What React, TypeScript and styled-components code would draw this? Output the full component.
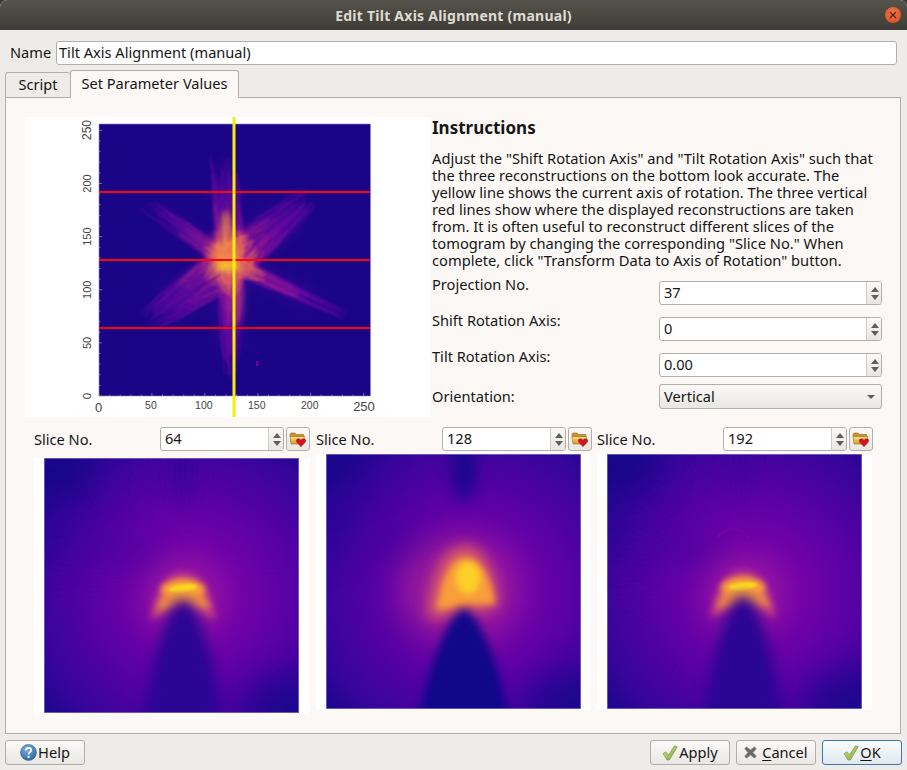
import React from 'react';
import { createGlobalStyle, styled } from 'styled-components';

const FONT = `"Noto Sans", "Open Sans", sans-serif`;
const BORDER = '#b3afa8';
const DIALOG_BG = '#eeece8';
const PANEL_BG = '#fcf8f5';

const GlobalStyle = createGlobalStyle`
  html, body {
    margin: 0;
    padding: 0;
    background: #3a3933;
  }
  body {
    font-family: ${FONT};
    font-size: 14.6px;
    color: #161616;
  }
`;

const Window = styled.div`
  width: 907px;
  height: 770px;
  display: flex;
  flex-direction: column;
  background: ${DIALOG_BG};
  border-radius: 7px 7px 0 0;
  overflow: hidden;
`;

const TitleBar = styled.div`
  height: 30px;
  flex: none;
  position: relative;
  display: flex;
  align-items: center;
  justify-content: center;
  background: linear-gradient(#55534b, #3d3c36);
  color: #dfdbd2;
  font-weight: 700;
  font-size: 14px;
  letter-spacing: 0.25px;
`;

const CloseButton = styled.div`
  position: absolute;
  top: 7px;
  right: 6px;
  width: 16px;
  height: 16px;
  border-radius: 50%;
  background: radial-gradient(circle at 50% 35%, #f2764a, #d9481c);
  display: flex;
  align-items: center;
  justify-content: center;
`;

const Body = styled.div`
  flex: 1;
  display: flex;
  flex-direction: column;
  padding: 0 5px 5px;
  min-height: 0;
`;

const NameRow = styled.div`
  display: flex;
  align-items: center;
  margin: 11px 5px 5px 5px;
`;

const NameLabel = styled.span`
  width: 46px;
  flex: none;
  padding-bottom: 2px;
`;

const Field = styled.div`
  flex: 1;
  height: 24px;
  box-sizing: border-box;
  border: 1px solid ${BORDER};
  border-radius: 3px;
  background: #fff;
  padding: 0 2px 2px;
  display: flex;
  align-items: center;
`;

const TabBar = styled.div`
  display: flex;
  align-items: flex-end;
  height: 28px;
  margin-bottom: -1px;
  position: relative;
  z-index: 1;
`;

const Tab = styled.div<{ $active?: boolean }>`
  box-sizing: border-box;
  display: flex;
  align-items: center;
  justify-content: center;
  border: 1px solid ${BORDER};
  border-radius: 3px 3px 0 0;
  padding-bottom: 2px;
  height: ${({ $active }) => ($active ? 28 : 26)}px;
  width: ${({ $active }) => ($active ? 169 : 65)}px;
  background: ${({ $active }) => ($active ? PANEL_BG : DIALOG_BG)};
  ${({ $active }) => $active && 'border-bottom-color: ' + PANEL_BG + ';'}
  ${({ $active }) => !$active && 'border-right: none;'}
`;

const Panel = styled.div`
  flex: none;
  width: 896px;
  height: 637px;
  box-sizing: border-box;
  border: 1px solid ${BORDER};
  background: ${PANEL_BG};
  padding: 19px 0 0 19px;
`;

const TopRow = styled.div`
  display: flex;
  gap: 2px;
  height: 300px;
`;

const PlotBox = styled.div`
  width: 405px;
  height: 300px;
  background: #fff;
  flex: none;
  svg {
    display: block;
  }
`;

const Side = styled.div`
  width: 450px;
  display: flex;
  flex-direction: column;
`;

const Heading = styled.div`
  font-size: 17px;
  font-weight: 700;
  line-height: 22px;
  margin-bottom: 11px;
`;

const Instructions = styled.div`
  font-size: 14.7px;
  line-height: 17px;
  white-space: nowrap;
  margin-bottom: 12px;
`;

const FormRow = styled.div<{ $gap: number; $center?: boolean }>`
  display: flex;
  justify-content: space-between;
  align-items: ${({ $center }) => ($center ? 'center' : 'flex-start')};
  margin-bottom: ${({ $gap }) => $gap}px;
  line-height: 18px;
`;

const RowLabel = styled.span<{ $lift: number }>`
  margin-top: ${({ $lift }) => -$lift}px;
`;

const Spin = styled.div<{ $width: number }>`
  width: ${({ $width }) => $width}px;
  height: 24px;
  box-sizing: border-box;
  border: 1px solid ${BORDER};
  border-radius: 3px;
  background: #fff;
  display: flex;
  overflow: hidden;
  flex: none;
`;

const SpinValue = styled.div`
  flex: 1;
  padding-left: 4px;
  line-height: 21px;
`;

const SpinArrows = styled.div`
  width: 13px;
  padding: 0 0 0 1px;
  border-left: 1px solid #cfccc6;
  background: linear-gradient(#fbfaf9, #e8e6e2);
  display: flex;
  flex-direction: column;
  align-items: center;
  justify-content: center;
  gap: 3px;
`;

const ArrowUp = styled.span`
  width: 0;
  height: 0;
  border-left: 4px solid transparent;
  border-right: 4px solid transparent;
  border-bottom: 5px solid #5f5f5f;
`;

const ArrowDown = styled.span`
  width: 0;
  height: 0;
  border-left: 4px solid transparent;
  border-right: 4px solid transparent;
  border-top: 5px solid #5f5f5f;
`;

const Combo = styled.div`
  width: 223px;
  height: 25px;
  box-sizing: border-box;
  border: 1px solid ${BORDER};
  border-radius: 3px;
  background: linear-gradient(#fbfaf9, #e9e7e3);
  display: flex;
  align-items: center;
  justify-content: space-between;
  padding: 0 6px 2px 4px;
`;

const ComboArrow = styled.span`
  width: 0;
  height: 0;
  border-left: 4px solid transparent;
  border-right: 4px solid transparent;
  border-top: 4px solid #5f5f5f;
  margin-top: 2px;
`;

const SliceRow = styled.div`
  display: grid;
  grid-template-columns: 276px 275px 275px;
  column-gap: 6px;
  margin: 10px 0 0 9px;
`;

const SliceHead = styled.div`
  display: flex;
  align-items: center;
  height: 24px;
`;

const SliceLabel = styled.div`
  width: 126px;
  flex: none;
`;

const IconButton = styled.div`
  width: 24px;
  height: 24px;
  box-sizing: border-box;
  margin-left: 2px;
  border: 1px solid ${BORDER};
  border-radius: 3px;
  background: linear-gradient(#fbfaf9, #e9e7e3);
  display: flex;
  align-items: center;
  justify-content: center;
  flex: none;
`;

const SliceFrame = styled.div<{ $top: number }>`
  width: 100%;
  height: 256px;
  background: #fff;
  margin-top: ${({ $top }) => $top}px;
  padding-left: 10px;
  box-sizing: border-box;
  svg {
    display: block;
  }
`;

const ButtonBar = styled.div`
  display: flex;
  gap: 6px;
  margin-top: 6px;
`;

const Spacer = styled.div`
  flex: 1;
`;

const ButtonText = styled.span`
  margin-top: -2px;
  u {
    text-underline-offset: 2px;
  }
`;

const Button = styled.div<{ $default?: boolean }>`
  width: 80px;
  height: 25px;
  box-sizing: border-box;
  border: 1px solid ${({ $default }) => ($default ? '#3b7aa8' : BORDER)};
  border-radius: 3px;
  background: ${({ $default }) =>
    $default ? 'linear-gradient(#fbfcfd, #dfe8ee)' : 'linear-gradient(#fbfaf9, #e9e7e3)'};
  display: flex;
  align-items: center;
  justify-content: center;
  gap: 1px;
`;

const Spinner = ({ value, width }: { value: string; width: number }) => (
  <Spin $width={width}>
    <SpinValue>{value}</SpinValue>
    <SpinArrows>
      <ArrowUp />
      <ArrowDown />
    </SpinArrows>
  </Spin>
);

// small seeded generator so the fibres stay the same between loads
const makeRandom = (seed: number) => () => {
  seed = (seed * 16807) % 2147483647;
  return seed / 2147483647;
};

const CENTER = { x: 132, y: 139 };

const ARMS = [
  { x: 124, y: 30, spread: 30, tip: 14, count: 70 },
  { x: 46, y: 78, spread: 16, tip: 9, count: 45 },
  { x: 214, y: 72, spread: 44, tip: 12, count: 90 },
  { x: 248, y: 192, spread: 20, tip: 5, count: 50 },
  { x: 48, y: 198, spread: 46, tip: 14, count: 90 },
  { x: 130, y: 256, spread: 30, tip: 6, count: 70 },
];

const fibres = (seed: number, reach: number, density: number) => {
  const random = makeRandom(seed);
  const paths: { d: string; width: number }[] = [];
  ARMS.forEach((arm) => {
    for (let i = 0; i < arm.count * density; i++) {
      const len = reach * (0.5 + random() * 0.5);
      const dx = arm.x - CENTER.x;
      const dy = arm.y - CENTER.y;
      const norm = Math.hypot(dx, dy);
      const nx = -dy / norm;
      const ny = dx / norm;
      const side = random() - 0.5;
      const bend = (random() - 0.5) * 8;
      // fibres run side by side as a bundle, then pinch towards the tip
      const sx = CENTER.x + nx * side * arm.spread * 0.7 + (random() - 0.5) * 10;
      const sy = CENTER.y + ny * side * arm.spread * 0.7 + (random() - 0.5) * 10;
      const mx = CENTER.x + dx * 0.5 * len + nx * (side * arm.spread + bend);
      const my = CENTER.y + dy * 0.5 * len + ny * (side * arm.spread + bend);
      const ex = CENTER.x + dx * len + nx * side * arm.tip * 2;
      const ey = CENTER.y + dy * len + ny * side * arm.tip * 2;
      paths.push({
        d: `M${sx.toFixed(1)} ${sy.toFixed(1)}Q${mx.toFixed(1)} ${my.toFixed(1)} ${ex.toFixed(1)} ${ey.toFixed(1)}`,
        width: 0.6 + random() * 1.1,
      });
    }
  });
  return paths;
};

const OUTER = fibres(7, 1, 1);
const MIDDLE = fibres(31, 0.6, 0.8);
const INNER = fibres(97, 0.3, 0.7);

const TICKS = Array.from({ length: 26 }, (_, i) => i * 10);
const scaleX = (v: number) => 74 + (v * 271) / 256;
const scaleY = (v: number) => 279 - (v * 272) / 256;

const AxisLabels = [50, 100, 150, 200];

const Blur = ({ id, amount }: { id: string; amount: number }) => (
  <filter id={id} filterUnits="userSpaceOnUse" x="-120" y="-120" width="620" height="620" colorInterpolationFilters="sRGB">
    <feGaussianBlur stdDeviation={amount} />
  </filter>
);

const Plot = () => (
  <svg width={405} height={300} viewBox="0 0 405 300">
    <defs>
      <Blur id="soft" amount={0.9} />
      <Blur id="wide" amount={8} />
      <Blur id="softer" amount={3} />
      <clipPath id="plotClip">
        <rect x={0} y={0} width={271} height={272} />
      </clipPath>
    </defs>
    <rect x={74} y={7} width={271.5} height={272} fill="#1b0587" stroke="#8d8bc6" strokeWidth={0.6} />
    <g transform="translate(74 7)" clipPath="url(#plotClip)">
      <g filter="url(#wide)" stroke="#6a0aa6" strokeLinecap="round" opacity={0.4}>
        {ARMS.map((arm, i) => (
          <line key={i} x1={CENTER.x} y1={CENTER.y} x2={(CENTER.x + arm.x * 2) / 3} y2={(CENTER.y + arm.y * 2) / 3} strokeWidth={arm.spread * 0.6} />
        ))}
      </g>
      <g filter="url(#soft)" fill="none" strokeLinecap="round">
        {OUTER.map((p, i) => (
          <path key={i} d={p.d} stroke={i % 3 ? '#640aa6' : '#8410a4'} strokeWidth={p.width} opacity={0.3} />
        ))}
        {MIDDLE.map((p, i) => (
          <path key={i} d={p.d} stroke={i % 2 ? '#9a1c95' : '#b0308a'} strokeWidth={p.width} opacity={0.22} />
        ))}
      </g>
      <ellipse cx={130} cy={130} rx={24} ry={28} fill="#b12a90" opacity={0.55} filter="url(#softer)" />
      <g filter="url(#soft)" fill="none" strokeLinecap="round">
        {INNER.map((p, i) => (
          <path key={i} d={p.d} stroke={i % 2 ? '#d8586c' : '#ec7a52'} strokeWidth={p.width} opacity={0.34} />
        ))}
      </g>
      <ellipse cx={127} cy={105} rx={5} ry={18} fill="#f59a3f" opacity={0.7} filter="url(#softer)" />
      <ellipse cx={127} cy={128} rx={15} ry={12} fill="#f58f45" opacity={0.7} filter="url(#softer)" />
      <ellipse cx={128} cy={142} rx={13} ry={6} fill="#fcd225" opacity={0.8} filter="url(#softer)" />
      <ellipse cx={138} cy={175} rx={7} ry={26} fill="#cc4778" opacity={0.45} filter="url(#softer)" />
      <rect x={157} y={237} width={2.5} height={5} fill="#6a00a8" />
    </g>
    {TICKS.map((t) => (
      <g key={t} stroke="#9a9a9a" strokeWidth={0.7}>
        <line x1={scaleX(t)} x2={scaleX(t)} y1={279} y2={t % 50 ? 277.5 : 276} />
        <line x1={74} x2={t % 50 ? 75.5 : 77} y1={scaleY(t)} y2={scaleY(t)} />
      </g>
    ))}
    <g fontFamily={`"Liberation Sans", sans-serif`} fill="#444">
      <text x={73.5} y={295} fontSize={13} textAnchor="middle">0</text>
      <text x={339} y={294} fontSize={13} textAnchor="middle">250</text>
      {AxisLabels.map((v) => (
        <text key={v} x={scaleX(v) - 1} y={292} fontSize={10.5} textAnchor="middle">{v}</text>
      ))}
      <text transform="translate(66 279) rotate(-90)" fontSize={11.5} textAnchor="middle">0</text>
      <text transform="translate(66 13) rotate(-90)" fontSize={12} textAnchor="middle">250</text>
      {AxisLabels.map((v) => (
        <text key={v} transform={`translate(66 ${scaleY(v)}) rotate(-90)`} fontSize={11} textAnchor="middle">{v}</text>
      ))}
    </g>
    <g fill="#fb0606">
      <rect x={74} y={74} width={271} height={2} />
      <rect x={74} y={142} width={271} height={2} />
      <rect x={74} y={210} width={271} height={2} />
    </g>
    <rect x={207.5} y={0} width={3} height={300} fill="#f5ee0a" />
  </svg>
);

interface SliceImageProps {
  id: string;
  cx: number;
  apex: number;
  darkWidth: number;
  darkFill: string;
  domeBlur: number;
  notch: number;
  corner: number;
  children: React.ReactNode;
}

const RAYS = Array.from({ length: 120 }, (_, i) => (i * Math.PI) / 60);

const SliceImage = ({ id, cx, apex, darkWidth, darkFill, domeBlur, notch, corner, children }: SliceImageProps) => (
  <svg width={255} height={255} viewBox="0 0 255 255">
    <defs>
      <radialGradient id={`${id}-base`} cx="0.58" cy="0.54" r="0.72">
        <stop offset="0" stopColor="#8a08a5" />
        <stop offset="0.28" stopColor="#7002a8" />
        <stop offset="0.6" stopColor="#5001a3" />
        <stop offset="0.85" stopColor="#36059a" />
        <stop offset="1" stopColor="#1f068d" />
      </radialGradient>
      <Blur id={`${id}-b14`} amount={16} />
      <Blur id={`${id}-b7`} amount={7} />
      <Blur id={`${id}-dome`} amount={domeBlur} />
      <Blur id={`${id}-b3`} amount={3} />
      <Blur id={`${id}-b1`} amount={1} />
      <clipPath id={`${id}-clip`}>
        <rect width={255} height={255} />
      </clipPath>
    </defs>
    <g clipPath={`url(#${id}-clip)`}>
      <rect width={255} height={255} fill={`url(#${id}-base)`} />
      <ellipse cx={8} cy={12} rx={48} ry={34} fill="#170789" opacity={corner} filter={`url(#${id}-b14)`} />
      <ellipse cx={6} cy={72} rx={20} ry={30} fill="#2a0694" opacity={0.7} filter={`url(#${id}-b14)`} />
      <ellipse cx={70} cy={92} rx={52} ry={12} fill="#3c049b" opacity={0.6} filter={`url(#${id}-b14)`} transform="rotate(18 70 92)" />
      <ellipse cx={cx} cy={14} rx={12} ry={34} fill="#15078a" opacity={notch} filter={`url(#${id}-b7)`} />
      <ellipse cx={250} cy={250} rx={50} ry={34} fill="#16078a" opacity={0.75} filter={`url(#${id}-b14)`} />
      {children}
      <path
        d={`M${cx - darkWidth} 268 C${cx - darkWidth * 0.8} ${apex + 60} ${cx - 14} ${apex} ${cx} ${apex} C${cx + 14} ${apex} ${cx + darkWidth * 0.8} ${apex + 60} ${cx + darkWidth} 268 Z`}
        fill={darkFill}
        filter={`url(#${id}-dome)`}
      />
    </g>
    <rect x={0.3} y={0.3} width={254.4} height={254.4} fill="none" stroke="#8d8bd6" strokeWidth={0.6} />
  </svg>
);

// thin bright arc sitting on the dark dome, slices 64 and 192
const ThinHotSpot = ({ id, cx, top }: { id: string; cx: number; top: number }) => (
  <>
    <g stroke="#8f0da4" strokeWidth={1} opacity={0.1}>
      {RAYS.map((a, i) => (
        <line key={i} x1={cx + Math.cos(a) * 50} y1={top + Math.sin(a) * 50} x2={cx + Math.cos(a) * 130} y2={top + Math.sin(a) * 130} />
      ))}
    </g>
    <ellipse cx={cx} cy={top + 18} rx={36} ry={36} fill="#a01ea0" opacity={0.85} filter={`url(#${id}-b14)`} />
    <path d={`M${cx - 33} ${top + 40} Q${cx - 26} ${top - 8} ${cx} ${top - 8} Q${cx + 26} ${top - 8} ${cx + 33} ${top + 40} L${cx} ${top + 30} Z`}
      fill="#bf3c85" opacity={0.9} filter={`url(#${id}-b3)`} />
    <path d={`M${cx - 27} ${top + 32} Q${cx - 18} ${top - 1} ${cx} ${top - 1} Q${cx + 18} ${top - 1} ${cx + 27} ${top + 30} L${cx} ${top + 24} Z`}
      fill="#f28a49" filter={`url(#${id}-b3)`} />
    <ellipse cx={cx} cy={top + 9} rx={22} ry={8} fill="#fca636" filter={`url(#${id}-b3)`} />
    <ellipse cx={cx} cy={top + 8} rx={14} ry={3.5} fill="#fcdc20" transform={`rotate(-6 ${cx} ${top + 8})`} filter={`url(#${id}-b1)`} />
  </>
);

const WideHotSpot = ({ id, cx }: { id: string; cx: number }) => (
  <>
    <ellipse cx={cx - 6} cy={135} rx={58} ry={52} fill="#a3209a" opacity={0.85} filter={`url(#${id}-b14)`} />
    <path d={`M${cx - 38} 164 Q${cx - 30} 92 ${cx} 92 Q${cx + 26} 92 ${cx + 34} 152 L${cx} 160 Z`}
      fill="#dc5f63" filter={`url(#${id}-b7)`} />
    <path d={`M${cx - 28} 156 Q${cx - 20} 104 ${cx} 104 Q${cx + 22} 104 ${cx + 30} 150 L${cx} 150 Z`}
      fill="#f89e3a" filter={`url(#${id}-b3)`} />
    <ellipse cx={cx + 3} cy={124} rx={12} ry={16} fill="#fdd028" filter={`url(#${id}-b3)`} />
  </>
);

const FolderHeart = () => (
  <svg width={18} height={17} viewBox="0 0 18 17">
    <defs>
      <linearGradient id="folder-fill" x1="0" y1="0" x2="0" y2="1">
        <stop offset="0" stopColor="#fbe08a" />
        <stop offset="1" stopColor="#d99a25" />
      </linearGradient>
    </defs>
    <path d="M1 3.5 Q1 2 2.5 2 H6 L7.5 3.5 H14 Q15 3.5 15 4.5 V5.5 H1 Z" fill="#c99430" stroke="#8c6a1c" strokeWidth={0.6} />
    <path d="M1 5.5 H15.5 L14.5 13 H2 Z" fill="url(#folder-fill)" stroke="#a67a1e" strokeWidth={0.7} />
    <path d="M12 15.8 L7.6 11 Q6.4 9 8.2 8 Q10.4 7.2 12 9.2 Q13.6 7.2 15.8 8 Q17.6 9 16.4 11 Z" fill="#d3141f" stroke="#8e1016" strokeWidth={0.4} />
  </svg>
);

const HelpIcon = () => (
  <svg width={17} height={17} viewBox="0 0 17 17">
    <defs>
      <radialGradient id="help-fill" cx="0.4" cy="0.3" r="0.8">
        <stop offset="0" stopColor="#7fb1dd" />
        <stop offset="1" stopColor="#20619f" />
      </radialGradient>
    </defs>
    <circle cx={8.5} cy={8.5} r={8} fill="url(#help-fill)" stroke="#27598a" strokeWidth={0.5} />
    <path d="M5.8 6.4 Q6 3.8 8.6 3.8 Q11.2 3.9 11.2 6 Q11.2 7.4 9.7 8.2 Q8.6 8.8 8.6 10.4" fill="none" stroke="#fff" strokeWidth={1.7} />
    <circle cx={8.6} cy={12.9} r={1.1} fill="#fff" />
  </svg>
);

const CheckIcon = ({ id }: { id: string }) => (
  <svg width={16} height={16} viewBox="0 0 16 16">
    <defs>
      <linearGradient id={id} x1="0" y1="0" x2="1" y2="1">
        <stop offset="0" stopColor="#d3e58a" />
        <stop offset="1" stopColor="#7ea234" />
      </linearGradient>
    </defs>
    <path d="M1 8.6 L3.8 6.8 L6.4 10 L12.6 0.8 L15.2 1.8 L7.4 15 L5 15 Z" fill={`url(#${id})`} stroke="#6f8f35" strokeWidth={0.6} />
  </svg>
);

const CancelIcon = () => (
  <svg width={13} height={13} viewBox="0 0 13 13">
    <path d="M2.6 0.8 L6.5 4 L10.4 0.8 L12.4 2.8 L9 6.5 L12.4 10.2 L10.4 12.2 L6.5 9 L2.6 12.2 L0.6 10.2 L4 6.5 L0.6 2.8 Z" fill="#6a6a68" stroke="#8a8a88" strokeWidth={0.5} />
  </svg>
);

const CloseIcon = () => (
  <svg width={8} height={8} viewBox="0 0 8 8">
    <path d="M1 1 L7 7 M7 1 L1 7" stroke="#4a2a1c" strokeWidth={1.3} />
  </svg>
);

interface SliceProps {
  value: string;
  top: number;
  children: React.ReactNode;
}

const Slice = ({ value, top, children }: SliceProps) => (
  <div>
    <SliceHead>
      <SliceLabel>Slice No.</SliceLabel>
      <Spinner value={value} width={124} />
      <IconButton>
        <FolderHeart />
      </IconButton>
    </SliceHead>
    <SliceFrame $top={top}>{children}</SliceFrame>
  </div>
);

const App = () => (
  <Window>
    <GlobalStyle />
    <TitleBar>
      Edit Tilt Axis Alignment (manual)
      <CloseButton>
        <CloseIcon />
      </CloseButton>
    </TitleBar>
    <Body>
      <NameRow>
        <NameLabel>Name</NameLabel>
        <Field>Tilt Axis Alignment (manual)</Field>
      </NameRow>
      <TabBar>
        <Tab>Script</Tab>
        <Tab $active>Set Parameter Values</Tab>
      </TabBar>
      <Panel>
        <TopRow>
          <PlotBox>
            <Plot />
          </PlotBox>
          <Side>
            <Heading>Instructions</Heading>
            <Instructions>
              Adjust the "Shift Rotation Axis" and "Tilt Rotation Axis" such that<br />
              the three reconstructions on the bottom look accurate. The<br />
              yellow line shows the current axis of rotation. The three vertical<br />
              red lines show where the displayed reconstructions are taken<br />
              from. It is often useful to reconstruct different slices of the<br />
              tomogram by changing the corresponding "Slice No." When<br />
              complete, click "Transform Data to Axis of Rotation" button.
            </Instructions>
            <FormRow $gap={12}>
              <RowLabel $lift={6}>Projection No.</RowLabel>
              <Spinner value="37" width={223} />
            </FormRow>
            <FormRow $gap={12}>
              <RowLabel $lift={6}>Shift Rotation Axis:</RowLabel>
              <Spinner value="0" width={223} />
            </FormRow>
            <FormRow $gap={7}>
              <RowLabel $lift={6}>Tilt Rotation Axis:</RowLabel>
              <Spinner value="0.00" width={223} />
            </FormRow>
            <FormRow $gap={0} $center>
              <RowLabel $lift={2}>Orientation:</RowLabel>
              <Combo>
                Vertical
                <ComboArrow />
              </Combo>
            </FormRow>
          </Side>
        </TopRow>
        <SliceRow>
          <Slice value="64" top={7}>
            <SliceImage id="s1" cx={139} apex={141} darkWidth={40} darkFill="#2a0593" domeBlur={7} notch={0.25} corner={0.7}>
              <ThinHotSpot id="s1" cx={139} top={122} />
            </SliceImage>
          </Slice>
          <Slice value="128" top={3}>
            <SliceImage id="s2" cx={138} apex={155} darkWidth={46} darkFill="#10078a" domeBlur={5} notch={0.85} corner={0.3}>
              <WideHotSpot id="s2" cx={139} />
            </SliceImage>
          </Slice>
          <Slice value="192" top={3}>
            <SliceImage id="s3" cx={136} apex={141} darkWidth={40} darkFill="#2a0593" domeBlur={7} notch={0.1} corner={0.7}>
              <ThinHotSpot id="s3" cx={136} top={124} />
              <path d="M110 84 Q125 66 142 84" fill="none" stroke="#7d0aa6" strokeWidth={1.5} filter="url(#s3-b1)" />
            </SliceImage>
          </Slice>
        </SliceRow>
      </Panel>
      <ButtonBar>
        <Button>
          <HelpIcon />
          <ButtonText>Help</ButtonText>
        </Button>
        <Spacer />
        <Button>
          <CheckIcon id="check-apply" />
          <ButtonText>Apply</ButtonText>
        </Button>
        <Button>
          <CancelIcon />
          <ButtonText>&nbsp;<u>C</u>ancel</ButtonText>
        </Button>
        <Button $default>
          <CheckIcon id="check-ok" />
          <ButtonText><u>O</u>K</ButtonText>
        </Button>
      </ButtonBar>
    </Body>
  </Window>
);

export default App;
